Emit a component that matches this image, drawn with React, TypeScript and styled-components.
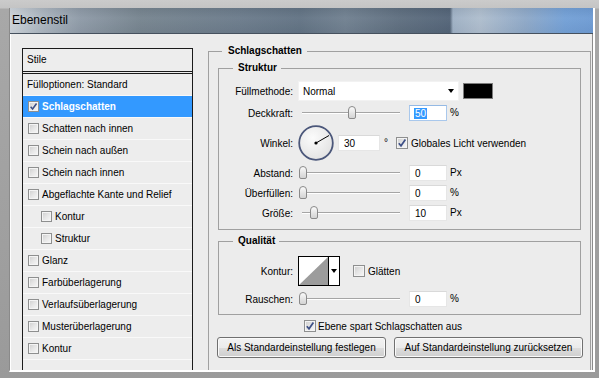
import styled, { createGlobalStyle } from 'styled-components';

const GlobalStyle = createGlobalStyle`
  html, body {
    margin: 0;
    padding: 0;
  }
  body {
    font-family: "Liberation Sans", Arial, sans-serif;
    font-size: 10px;
    color: #000;
  }
`;

const Frame = styled.div`
  width: 599px;
  height: 378px;
  box-sizing: border-box;
  padding: 8px 4px 6px 9px;
  background: linear-gradient(#cbcbcb 0, #c4c4c4 8px, #a8a8a8 9px, #9a9a9a 100%);
  display: flex;
`;

const Window = styled.div`
  flex: 1;
  display: flex;
  flex-direction: column;
  border-left: 1px solid #8a8a8a;
  border-right: 2px solid #fff;
  border-bottom: 2px solid #fff;
  background: #ececec;
  overflow: hidden;
`;

const TitleBar = styled.div`
  height: 25px;
  line-height: 25px;
  padding-left: 2px;
  font-size: 12px;
  border-bottom: 1px solid #46515e;
  background:
    linear-gradient(rgba(0, 0, 0, 0.05), rgba(255, 255, 255, 0.04) 40%, rgba(0, 0, 0, 0.03)),
    linear-gradient(90deg, #cdd4db 0, #adb7c1 30px, #8e9aa7 70px, #76848f 130px, #6b7b8b 230px,
      #627384 290px, #708090 335px, #5e6e7f 390px, #536478 440px, #9fb1c5 443px, #aebdcd 470px,
      #8ea8c7 515px, #73a0d6 555px, #6e9bd3 100%);
`;

const Body = styled.div`
  flex: 1;
  display: grid;
  grid-template-columns: 171px 383px;
  column-gap: 15px;
  padding: 14px 0 0 11px;
  border-left: 1px solid #fff;
  border-right: 1px solid #8c8c8c;
  min-height: 0;
`;

/* ---------- left list ---------- */

const StyleList = styled.div`
  border: 1px solid #1b1b1b;
  border-bottom: none;
  background: #ededed;
  display: flex;
  flex-direction: column;
`;

const ListHeader = styled.div`
  height: 22px;
  line-height: 22px;
  padding-left: 4px;
  border-bottom: 3px double #1b1b1b;
`;

const ListRow = styled.div<{ $selected?: boolean; $indent?: boolean; $plain?: boolean }>`
  height: 21px;
  display: flex;
  align-items: center;
  padding-left: ${p => (p.$plain ? 4 : p.$indent ? 18 : 5)}px;
  border-bottom: 1px solid #f9f9f9;
  background: ${p => (p.$selected ? '#3399ff' : 'transparent')};
  color: ${p => (p.$selected ? '#fff' : '#000')};
  font-weight: ${p => (p.$selected ? 'bold' : 'normal')};
`;

const CheckBox = styled.span<{ $size: number }>`
  width: ${p => p.$size}px;
  height: ${p => p.$size}px;
  box-sizing: border-box;
  flex-shrink: 0;
  border: 1px solid #8e8f8f;
  box-shadow: inset 0 0 0 1px #f4f4f4;
  background: linear-gradient(135deg, #cdcdcd 0%, #e6e6e6 50%, #f8f8f8 100%);
  display: flex;
  align-items: center;
  justify-content: center;
`;

const CheckText = styled.span<{ $gap?: number }>`
  margin-left: ${p => p.$gap ?? 3}px;
  white-space: nowrap;
`;

const Check = ({ size, checked }: { size: number; checked?: boolean }) => (
  <CheckBox $size={size}>
    {checked && (
      <svg width={size - 2} height={size - 2} viewBox="0 0 10 10">
        <path d="M1.8 5.2 L4 7.8 L8.4 1.6" fill="none" stroke="#3d4f86" strokeWidth="1.7" />
      </svg>
    )}
  </CheckBox>
);

/* ---------- right panel ---------- */

const Group = styled.fieldset`
  margin: -3px 0 0;
  padding: 0 9px;
  min-width: 0;
  border: 1px solid #a0a0a0;
  border-bottom: none;
  display: flex;
  flex-direction: column;
`;

const Legend = styled.legend<{ $offset: number; $padLeft: number; $padRight: number }>`
  font-weight: bold;
  font-size: 10px;
  line-height: 12px;
  margin-left: ${p => p.$offset}px;
  padding: 0 ${p => p.$padRight}px 0 ${p => p.$padLeft}px;
`;

const SubGroup = styled.fieldset<{ $top: number; $bottom: number; $gap: number }>`
  margin: 5px 0 0;
  padding: ${p => p.$top}px 0 ${p => p.$bottom}px;
  min-width: 0;
  border: 1px solid #a0a0a0;
  display: flex;
  flex-direction: column;
  gap: ${p => p.$gap}px;
`;

const FieldRow = styled.div<{ $h: number }>`
  height: ${p => p.$h}px;
  display: flex;
  align-items: center;
`;

const Label = styled.span`
  width: 74px;
  margin-right: 5px;
  text-align: right;
  flex-shrink: 0;
  white-space: nowrap;
`;

const Select = styled.div`
  width: 161px;
  height: 20px;
  box-sizing: border-box;
  background: #fff;
  border: 1px solid #f2f2f2;
  display: flex;
  align-items: center;
  justify-content: space-between;
  padding: 0 4px 0 4px;
`;

const Arrow = styled.span`
  width: 0;
  height: 0;
  border-left: 3px solid transparent;
  border-right: 3px solid transparent;
  border-top: 4px solid #000;
`;

const Swatch = styled.div`
  width: 30px;
  height: 16px;
  box-sizing: border-box;
  margin-left: 4px;
  background: #000;
  border: 1px solid #7c7c7c;
`;

const SliderBox = styled.div`
  position: relative;
  width: 104px;
  height: 16px;
  flex-shrink: 0;
`;

const Track = styled.div`
  position: absolute;
  left: 4px;
  right: 2px;
  top: 7px;
  height: 0;
  border-top: 1px solid #a5a5a5;
  border-bottom: 1px solid #fff;
`;

const Thumb = styled.div`
  position: absolute;
  top: 1px;
  width: 8px;
  height: 13px;
  box-sizing: border-box;
  border: 1px solid #8a8a8a;
  border-radius: 4px 4px 2px 2px;
  background: linear-gradient(#fbfbfb, #e2e2e2 60%, #d4d4d4);
`;

const Slider = ({ pos }: { pos: number }) => (
  <SliderBox>
    <Track />
    <Thumb style={{ left: pos }} />
  </SliderBox>
);

const NumberBox = styled.div<{ $w?: number; $ml?: number; $focus?: boolean }>`
  width: ${p => p.$w ?? 38}px;
  height: 16px;
  box-sizing: border-box;
  margin-left: ${p => p.$ml ?? 7}px;
  padding-left: 5px;
  background: #fff;
  border: 1px solid ${p => (p.$focus ? '#a9c8ec' : '#e6e6e6')};
  border-top-color: ${p => (p.$focus ? '#94b9e4' : '#d9d9d9')};
  display: flex;
  align-items: center;
`;

const Selected = styled.span`
  background: #3399ff;
  color: #fff;
  line-height: 11px;
  padding: 0 1px;
  margin-left: -1px;
`;

const Unit = styled.span<{ $ml?: number }>`
  margin-left: ${p => p.$ml ?? 3}px;
  position: relative;
  top: -1px;
`;

const Dial = () => (
  <svg width="36" height="36" viewBox="0 0 36 36">
    <defs>
      <radialGradient id="dialFill" cx="40%" cy="35%" r="70%">
        <stop offset="0%" stopColor="#fbfbfb" />
        <stop offset="100%" stopColor="#e2e2e2" />
      </radialGradient>
    </defs>
    <circle cx="18" cy="18" r="16.8" fill="url(#dialFill)" stroke="#4b577a" strokeWidth="1.8" />
    <line x1="18" y1="18" x2="31" y2="10.5" stroke="#000" strokeWidth="1" />
    <circle cx="18" cy="18" r="1.6" fill="#000" />
  </svg>
);

const ContourPicker = styled.div`
  width: 42px;
  height: 30px;
  box-sizing: border-box;
  border: 1px solid #000;
  background: #fff;
  display: flex;
`;

const ContourPreview = styled.div`
  width: 29px;
  height: 100%;
  border-right: 1px solid #000;
`;

const ContourArrow = styled.div`
  flex: 1;
  display: flex;
  align-items: center;
  justify-content: center;
`;

const OptionRow = styled.div`
  height: 12px;
  margin-top: 5px;
  padding-left: 86px;
  display: flex;
  align-items: center;
`;

const ButtonRow = styled.div`
  display: flex;
  gap: 8px;
  margin: 5px -2px 0 -1px;
`;

const Button = styled.div<{ $w?: number }>`
  height: 21px;
  box-sizing: border-box;
  ${p => (p.$w ? `width: ${p.$w}px;` : 'flex: 1;')}
  border: 1px solid #707070;
  border-radius: 3px;
  box-shadow: inset 0 0 0 1px #fafafa;
  background: linear-gradient(#f2f2f2 0%, #ebebeb 50%, #dddddd 51%, #cfcfcf 100%);
  display: flex;
  align-items: center;
  justify-content: center;
  white-space: nowrap;
`;

const listItems = [
  { label: 'Schlagschatten', checked: true, selected: true },
  { label: 'Schatten nach innen' },
  { label: 'Schein nach außen' },
  { label: 'Schein nach innen' },
  { label: 'Abgeflachte Kante und Relief' },
  { label: 'Kontur', indent: true },
  { label: 'Struktur', indent: true },
  { label: 'Glanz' },
  { label: 'Farbüberlagerung' },
  { label: 'Verlaufsüberlagerung' },
  { label: 'Musterüberlagerung' },
  { label: 'Kontur' },
];

const App = () => (
  <>
    <GlobalStyle />
    <Frame>
      <Window>
        <TitleBar>Ebenenstil</TitleBar>
        <Body>
          <StyleList>
            <ListHeader>Stile</ListHeader>
            <ListRow $plain>Fülloptionen: Standard</ListRow>
            {listItems.map((item, i) => (
              <ListRow key={i} $selected={item.selected} $indent={item.indent}>
                <Check size={11} checked={item.checked} />
                <CheckText>{item.label}</CheckText>
              </ListRow>
            ))}
          </StyleList>

          <Group>
            <Legend $offset={4} $padLeft={6} $padRight={5}>Schlagschatten</Legend>

            <SubGroup $top={7} $bottom={8} $gap={4}>
              <Legend $offset={14} $padLeft={5} $padRight={4}>Struktur</Legend>
              <FieldRow $h={20}>
                <Label>Füllmethode:</Label>
                <Select>
                  Normal
                  <Arrow />
                </Select>
                <Swatch />
              </FieldRow>
              <FieldRow $h={16}>
                <Label>Deckkraft:</Label>
                <Slider pos={50} />
                <NumberBox $focus>
                  <Selected>50</Selected>
                </NumberBox>
                <Unit>%</Unit>
              </FieldRow>
              <FieldRow $h={36}>
                <Label>Winkel:</Label>
                <Dial />
                <NumberBox $w={42} $ml={4}>30</NumberBox>
                <Unit $ml={4}>°</Unit>
                <span style={{ width: 8 }} />
                <Check size={12} checked />
                <CheckText>Globales Licht verwenden</CheckText>
              </FieldRow>
              <FieldRow $h={16}>
                <Label>Abstand:</Label>
                <Slider pos={1} />
                <NumberBox>0</NumberBox>
                <Unit>Px</Unit>
              </FieldRow>
              <FieldRow $h={16}>
                <Label>Überfüllen:</Label>
                <Slider pos={1} />
                <NumberBox>0</NumberBox>
                <Unit>%</Unit>
              </FieldRow>
              <FieldRow $h={16}>
                <Label>Größe:</Label>
                <Slider pos={12} />
                <NumberBox>10</NumberBox>
                <Unit>Px</Unit>
              </FieldRow>
            </SubGroup>

            <SubGroup $top={9} $bottom={7} $gap={5}>
              <Legend $offset={14} $padLeft={5} $padRight={4}>Qualität</Legend>
              <FieldRow $h={30}>
                <Label>Kontur:</Label>
                <ContourPicker>
                  <ContourPreview>
                    <svg width="29" height="28" viewBox="0 0 29 28">
                      <polygon points="0,28 29,0 29,28" fill="#9c9c9c" />
                    </svg>
                  </ContourPreview>
                  <ContourArrow>
                    <Arrow />
                  </ContourArrow>
                </ContourPicker>
                <span style={{ width: 13 }} />
                <Check size={12} />
                <CheckText>Glätten</CheckText>
              </FieldRow>
              <FieldRow $h={16}>
                <Label>Rauschen:</Label>
                <Slider pos={1} />
                <NumberBox>0</NumberBox>
                <Unit>%</Unit>
              </FieldRow>
            </SubGroup>

            <OptionRow>
              <Check size={12} checked />
              <CheckText $gap={2}>Ebene spart Schlagschatten aus</CheckText>
            </OptionRow>

            <ButtonRow>
              <Button $w={169}>Als Standardeinstellung festlegen</Button>
              <Button>Auf Standardeinstellung zurücksetzen</Button>
            </ButtonRow>
          </Group>
        </Body>
      </Window>
    </Frame>
  </>
);

export default App;
